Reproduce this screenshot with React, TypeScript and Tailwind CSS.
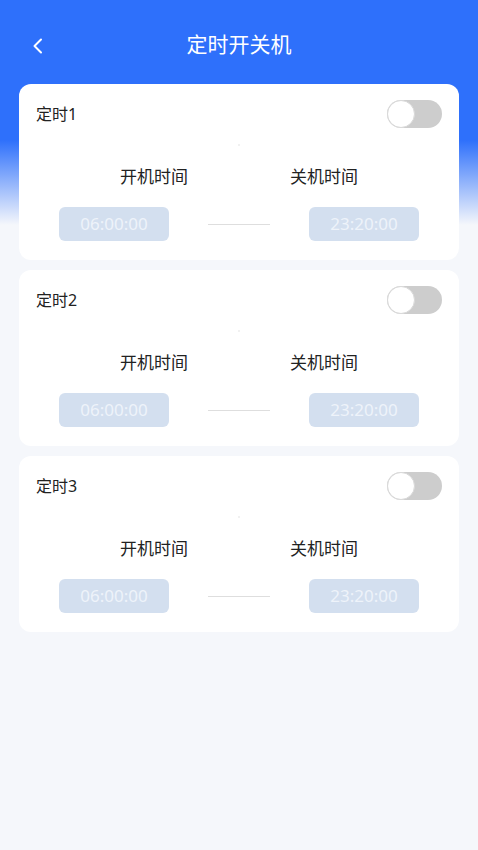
import React from "react";

function Toggle() {
  return (
    <div className="relative w-[55px] h-[28px] rounded-full bg-[#cdcdcd]">
      <div className="absolute left-0 top-0 w-[28px] h-[28px] rounded-full bg-white border border-[#d9d9d9]" />
    </div>
  );
}

function Card({ n }: { n: number }) {
  return (
    <div className="bg-white rounded-[12px] pb-[19px]">
      <div className="h-[60px] flex items-center justify-between pl-[17px] pr-[17px]">
        <span className="text-[16px] text-[#222]">定时{n}</span>
        <Toggle />
      </div>
      <div className="flex justify-center">
        <div className="w-[2px] h-[2px] rounded-full bg-[#ececec]" />
      </div>
      <div className="mt-[19px] flex justify-center gap-[102px] text-[17px] leading-[24px] text-[#222]">
        <span>开机时间</span>
        <span>关机时间</span>
      </div>
      <div className="mt-[18px] px-[40px] flex items-center justify-between">
        <div className="w-[110px] h-[34px] rounded-[6px] bg-[#d3dfef] flex items-center justify-center text-[17px] text-[#eef3fa]">
          06:00:00
        </div>
        <div className="w-[62px] h-px bg-[#dedede]" />
        <div className="w-[110px] h-[34px] rounded-[6px] bg-[#d3dfef] flex items-center justify-center text-[17px] text-[#eef3fa]">
          23:20:00
        </div>
      </div>
    </div>
  );
}

export default function App() {
  return (
    <div
      className="min-h-[850px] w-full bg-[linear-gradient(180deg,#2e70fb_0px,#2e70fb_140px,#f5f7fb_225px,#f5f7fb_100%)]"
      style={{ fontFamily: '"Noto Sans", "Noto Sans CJK SC", sans-serif' }}
    >
      <div className="pt-[21px] h-[70px] relative">
        <div className="h-[48px] flex items-center justify-center text-white text-[21px]">
          定时开关机
        </div>
        <div className="absolute left-[32px] top-[38px]">
          <svg width="12" height="16" viewBox="0 0 12 16" fill="none">
            <path d="M9 1.5L2.5 8L9 14.5" stroke="white" strokeWidth="2" strokeLinecap="round" strokeLinejoin="round" />
          </svg>
        </div>
      </div>
      <div className="mt-[14px] px-[19px] flex flex-col gap-[10px]">
        <Card n={1} />
        <Card n={2} />
        <Card n={3} />
      </div>
    </div>
  );
}
